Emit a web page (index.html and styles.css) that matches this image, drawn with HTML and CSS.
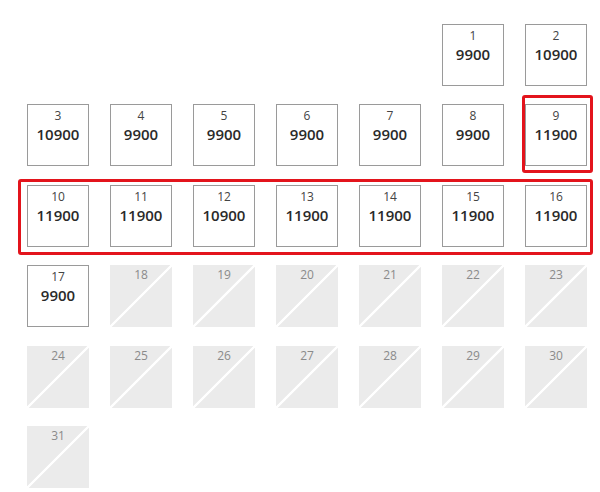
FILE: index.html
```html
<!DOCTYPE html>
<html>
<head>
<meta charset="utf-8">
<link rel="stylesheet" href="styles.css">
</head>
<body>
<div class="calendar">
  <div class="grid">
    <div class="blank"></div><div class="blank"></div><div class="blank"></div><div class="blank"></div><div class="blank"></div>
    <div class="day"><span class="num">1</span><span class="price">9900</span></div>
    <div class="day"><span class="num">2</span><span class="price">10900</span></div>
    <div class="day"><span class="num">3</span><span class="price">10900</span></div>
    <div class="day"><span class="num">4</span><span class="price">9900</span></div>
    <div class="day"><span class="num">5</span><span class="price">9900</span></div>
    <div class="day"><span class="num">6</span><span class="price">9900</span></div>
    <div class="day"><span class="num">7</span><span class="price">9900</span></div>
    <div class="day"><span class="num">8</span><span class="price">9900</span></div>
    <div class="day"><span class="num">9</span><span class="price">11900</span></div>
    <div class="day"><span class="num">10</span><span class="price">11900</span></div>
    <div class="day"><span class="num">11</span><span class="price">11900</span></div>
    <div class="day"><span class="num">12</span><span class="price">10900</span></div>
    <div class="day"><span class="num">13</span><span class="price">11900</span></div>
    <div class="day"><span class="num">14</span><span class="price">11900</span></div>
    <div class="day"><span class="num">15</span><span class="price">11900</span></div>
    <div class="day"><span class="num">16</span><span class="price">11900</span></div>
    <div class="day"><span class="num">17</span><span class="price">9900</span></div>
    <div class="day off"><span class="num">18</span></div>
    <div class="day off"><span class="num">19</span></div>
    <div class="day off"><span class="num">20</span></div>
    <div class="day off"><span class="num">21</span></div>
    <div class="day off"><span class="num">22</span></div>
    <div class="day off"><span class="num">23</span></div>
    <div class="day off"><span class="num">24</span></div>
    <div class="day off"><span class="num">25</span></div>
    <div class="day off"><span class="num">26</span></div>
    <div class="day off"><span class="num">27</span></div>
    <div class="day off"><span class="num">28</span></div>
    <div class="day off"><span class="num">29</span></div>
    <div class="day off"><span class="num">30</span></div>
    <div class="day off"><span class="num">31</span></div>
  </div>
  <div class="mark mark-day"></div>
  <div class="mark mark-row"></div>
</div>
</body>
</html>
```
FILE: styles.css
```css
html, body {
  margin: 0;
  padding: 0;
  background: #ffffff;
}
body {
  font-family: "Open Sans", "Liberation Sans", sans-serif;
  width: 600px;
  height: 492px;
  overflow: hidden;
}
.calendar {
  position: relative;
  width: 600px;
  height: 492px;
}
.grid {
  display: grid;
  grid-template-columns: repeat(7, 62px);
  grid-auto-rows: 62px;
  column-gap: 21px;
  row-gap: 18.4px;
  padding: 24px 0 0 27px;
}
.day {
  box-sizing: border-box;
  border: 1px solid #9a9a9a;
  background: #ffffff;
  display: flex;
  flex-direction: column;
  align-items: center;
  padding-top: 3px;
}
.num {
  font-size: 12px;
  line-height: 16px;
  color: #444444;
}
.price {
  font-size: 15px;
  line-height: 20px;
  font-weight: 600;
  color: #2a2a2a;
}
.day.off {
  border: none;
  padding-top: 2px;
  background: linear-gradient(to bottom right, #ebebeb calc(50% - 1.5px), #ffffff calc(50% - 1px), #ffffff calc(50% + 1px), #ebebeb calc(50% + 1.5px));
}
.day.off .num {
  color: #8a8a8a;
}
.mark {
  position: absolute;
  box-sizing: border-box;
  border: 3px solid #e3141c;
  border-radius: 3px;
}
.mark-day {
  left: 522px;
  top: 95px;
  width: 71px;
  height: 78px;
}
.mark-row {
  left: 18px;
  top: 179px;
  width: 575px;
  height: 76px;
}
```
